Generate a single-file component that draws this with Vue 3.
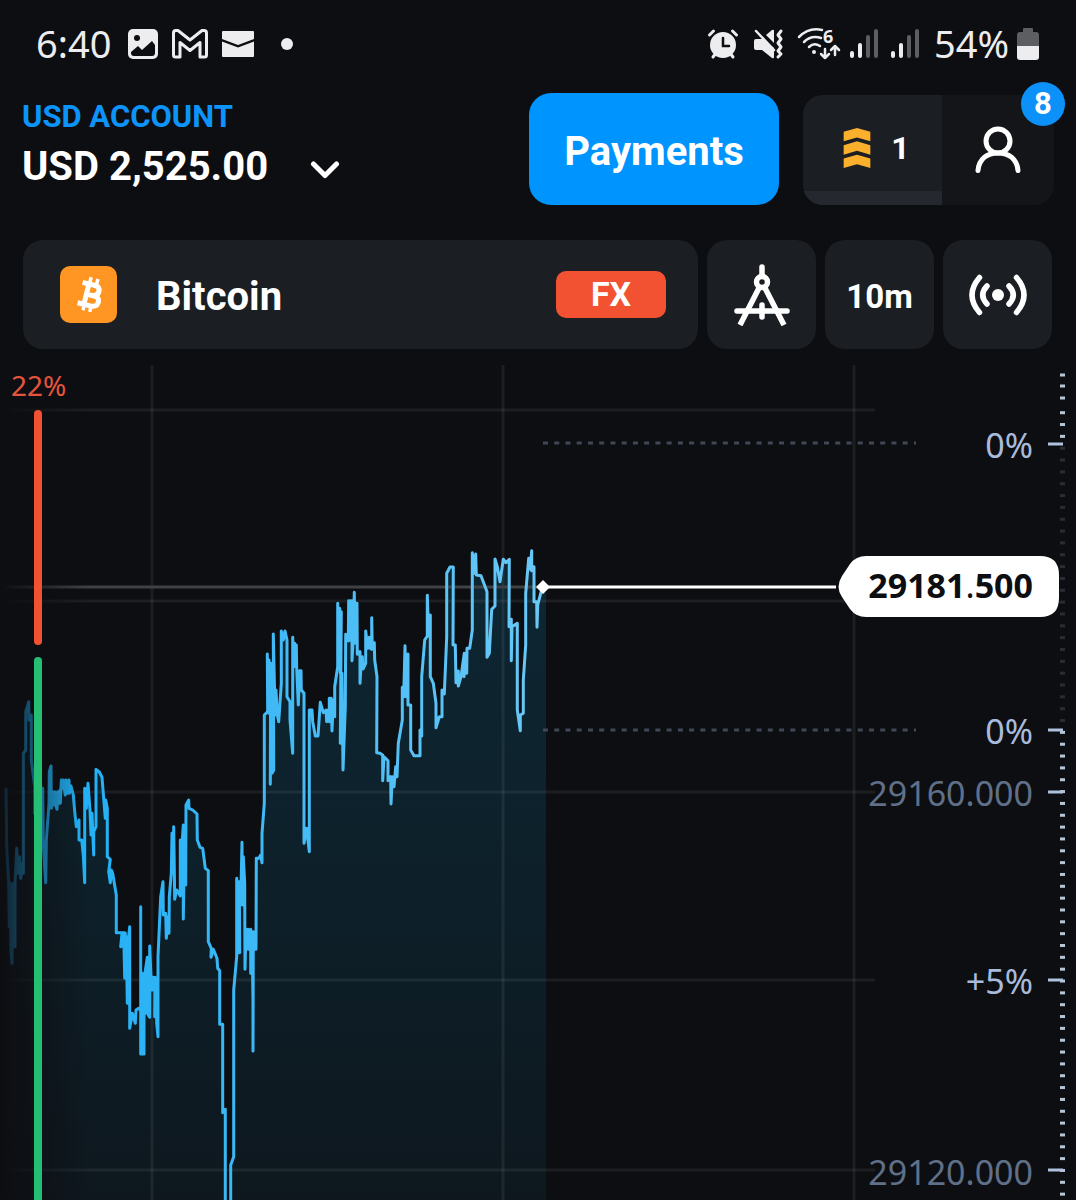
<script setup>
const toPixels = (originX, originY, raw) =>
  raw.trim().split(/\s+/).map((pair) => {
    const [x, y] = pair.split(',').map(Number)
    return [originX + x / 3, originY + y / 3]
  })

// Price history in third-of-a-pixel steps, oldest first.
const series = [
  ...toPixels(0, 740, `14,145 18,148 20,320 26,430 28,560 31,430 33,640 36,670 37,440 40,430 41,620 45,620 45,430 50,325 54,400 58,350 62,415 66,370 70,400 70,40 77,30
    77,-85 86,-115 87,-60 94,-75 94,60 104,140 104,220 114,240 120,145 128,145 130,315 137,428 139,300 147,190 148,95 153,78 154,205
    158,155 161,195 164,155 167,195 171,208 173,155 177,190 180,150 181,190 184,120 187,145 190,120 193,145 196,165 198,120 202,160 207,120 208,160 213,138 220,165 224,215
    229,260 237,240 237,300 245,300 250,345 254,428 254,145 259,205 264,130 270,210 273,285 276,220 281,345 281,275
    288,260 288,88 298,96 306,112 311,175 316,235 317,180 322,205 322,350 331,358 326,395 331,428 334,390 338,400 343,430 349,465 349,578 375,578
    362,620 366,580 370,620 371,580 374,715 376,580 380,712 379,590 382,790 385,600 389,560 389,865 397,820 406,850 408,810 416,805 422,810 422,500 422,942
    427,700 427,942 432,942 432,720 442,652 437,820 440,690 445,825 449,832 449,618 453,712 456,750 459,712 462,750 465,712 464,830 469,720 470,850 474,890 474,650 482,470 489,425 490,525
    497,520 499,595 504,530 507,580 508,470 514,400 516,280 519,400 521,260 524,478 530,450 541,468 541,300 544,460 547,300 550,255 550,537 554,260
    557,435 558,195 566,180 567,205 578,210 591,222 592,300 600,322 608,325 616,385 625,392 625,605 634,625 633,652
    640,628 651,655 653,685 659,692 659,853 668,853 668,1118 676,1108 676,1390 692,1390 692,1275 701,1250 701,750
    710,650 710,415 713,640 715,425 719,638 718,425 722,490 726,307 727,495 730,350 734,430 735,688 738,568 740,628 744,568 747,628 752,568 752,700 756,580 759,780
    759,933 760,575 764,628 768,628 769,355 777,355 782,345`),
  ...toPixels(200, 540, `186,968 186,880 193,790 193,525 203,515 202,342 206,520 207,360 210,520 212,370 211,733 214,380 216,700 221,690 220,282 223,420 226,525 228,450 232,525 236,545
    244,430 244,273 250,300 255,273 261,300 261,470 270,485 270,540 278,640 278,292 281,380 284,310 287,380 289,315 290,385 295,495 299,392 303,392
    304,450 312,460 312,910 320,865 328,935 328,510 336,510 338,545 346,588 354,588 361,487 370,518 378,510 380,545 384,510
    388,545 388,475 391,545 394,475 396,573 400,480 404,530 404,440 413,380 413,190 416,380 419,205 421,400 424,215 421,610 426,400 429,690 436,500 437,283 445,303
    446,182 449,300 452,182 455,305 456,182 456,362 460,290 463,157 464,310 468,190 471,190 472,343 480,335 480,430 484,360 487,350 489,387 497,370 497,273 503,325
    508,292 511,325 515,328 515,233 517,325 523,308 524,360 531,410 530,638 540,640`),
  ...toPixels(380, 530, `8,675 8,752 12,680 24,692 24,752 32,740 33,822 37,740 42,770 47,710 51,740 55,640 67,570 67,472 71,500 75,347 78,500 84,372
    84,525 92,525 92,660 102,677 120,677 120,600 125,618 125,440 134,330 142,318 142,196 146,318 151,255 151,440 160,460
    168,520 168,593 178,560 186,560 186,480 193,492 200,320 200,130 210,111 220,111 219,345 226,345 228,458 235,423
    235,468 243,440 253,370 252,440 256,380 260,430 261,355 269,355 277,300 277,68 283,130 287,72 289,135 303,137 321,185 321,382 328,370
    335,238 345,228 345,87 352,110 360,155 370,88 378,98 388,88 387,290 394,268 394,392 396,290 412,280 412,540
    421,602 421,555 430,550 430,450 437,345 437,190 446,85 451,118 455,62 455,122 462,110 462,215 470,215 471,292 473,225 482,190
    488,172`)
]
const linePoints = series.map((p) => p.map((v) => v.toFixed(1)).join(',')).join(' ')
const areaPoints = `5,1210 ${linePoints} 546,587 546,1210`

const columns = [152, 503, 854]
const rows = [410, 601, 792, 980, 1170]
const ticks = [444, 730, 792, 980, 1170]
const labels = [
  { text: '0%', y: 458 },
  { text: '0%', y: 744 },
  { text: '29160.000', y: 806, muted: true },
  { text: '+5%', y: 994 },
  { text: '29120.000', y: 1185, muted: true }
]
const dots = [375, 386, 398]
for (let i = 0; i < 67; i++) dots.push(412.7 + i * 11.84)
</script>

<template>
  <main class="app">
    <div class="status">
      <span>6:40</span>
      <svg class="photo" width="32" height="32" viewBox="0 0 32 32">
        <rect x="1" y="1" width="30" height="30" rx="5" fill="#ededef" />
        <circle cx="10" cy="10" r="3" fill="#0d0e12" />
        <path d="M4 24l7-6 4 4 10-9 3 4v8q0 3-3 3H7q-3 0-3-3z" fill="#0d0e12" />
      </svg>
      <svg class="gmail" width="36" height="30" viewBox="0 0 36 30" fill="none" stroke="#ededef" stroke-width="3" stroke-linejoin="round">
        <path d="M1.500 4Q1.500 1.500 4 1.500H6L18 11 30 1.500H32Q34.500 1.500 34.500 4V26Q34.500 28 32.500 28H28V13.500L18 21.500 8 13.500V28H3.500Q1.500 28 1.500 26Z" />
      </svg>
      <svg class="mail" width="34" height="28" viewBox="0 0 34 28">
        <path d="M2 1H32Q33 1 33 2V9L17 15 1 9V2Q1 1 2 1Z M1 11.500L17 17.500 33 11.500V26Q33 27 32 27H2Q1 27 1 26Z" fill="#ededef" />
      </svg>
      <i class="more"></i>
      <div class="indicators">
        <svg width="32" height="32" viewBox="0 0 32 32" stroke="#ededef" stroke-linecap="round" fill="none">
          <circle cx="16" cy="17" r="13" fill="#ededef" stroke="none" />
          <path d="M2.500 7L6.500 3M29.500 7L25.500 3M6 29l3-4M26 29l-3-4" stroke-width="3" />
          <path d="M16 10v8h6" stroke="#0d0e12" stroke-width="2.500" />
        </svg>
        <svg class="mute" width="32" height="32" viewBox="0 0 32 32" fill="#ededef">
          <path d="M3 11H10L21 20V29Q21 31 19 30L9 22H3Q1 22 1 20V13Q1 11 3 11Z M13 7L19 2Q21 1 21 3V15Z" />
          <path d="M3 3L21 22" stroke="#ededef" stroke-width="2.500" stroke-linecap="round" />
          <path d="M28 3l-3 4 3 4-3 4 3 4-3 4 3 3-3 3" fill="none" stroke="#ededef" stroke-width="3" stroke-linecap="round" stroke-linejoin="round" />
        </svg>
        <svg class="wifi" width="43" height="34" viewBox="0 0 43 34" fill="none" stroke="#ededef" stroke-width="2.500" stroke-linecap="round" stroke-linejoin="round">
          <path d="M2 10Q12 0 25 3M7 15Q14 8 24 11M12 20Q17 15 23 19" />
          <circle cx="17" cy="25" r="2" fill="#ededef" stroke="none" />
          <path d="M28 22V31M24 27l4 4 4-4M38 28V19M34 23l4-4 4 4" />
          <text x="26" y="16" class="wifi-generation">6</text>
        </svg>
        <svg v-for="n in 2" :key="n" class="signal" width="28" height="30" viewBox="0 0 28 30" stroke-width="4" stroke-linecap="round" fill="none">
          <path d="M2 24V27M10 16V27" stroke="#ededef" />
          <path d="M18 8V27M26 2V27" stroke="#5d5e61" />
        </svg>
        <span>54%</span>
        <svg class="battery" width="22" height="32" viewBox="0 0 22 32">
          <path d="M6 5V1q0-1 1-1h8q1 0 1 1V4h3q3 0 3 3V18H0V7q0-3 3-3H6Z" fill="#5d5e61" />
          <path d="M0 18H22V29q0 3-3 3H3q-3 0-3-3Z" fill="#ededef" />
        </svg>
      </div>
    </div>

    <header class="header">
      <button class="account">
        <span class="account-name">USD ACCOUNT</span>
        <span class="balance">USD 2,525.00
          <svg width="30" height="24" viewBox="0 0 30 24"><path d="M3.500 9L15 20.500 26.500 9" fill="none" stroke="#fff" stroke-width="5" stroke-linecap="round" stroke-linejoin="round" /></svg>
        </span>
      </button>
      <button class="payments">Payments</button>
      <div class="profile">
        <button class="level">
          <svg width="28" height="40" viewBox="0 0 28 42" fill="#fbb02d">
            <path d="M0 4L14 0 28 4V14L14 10 0 14ZM0 18L14 14 28 18V28L14 24 0 28ZM0 32L14 28 28 32V42L14 38 0 42Z" />
          </svg>
          1
        </button>
        <button class="user" aria-label="Profile">
          <svg width="46" height="48" viewBox="0 0 46 48" fill="none" stroke="#fff" stroke-width="5" stroke-linecap="round">
            <ellipse cx="23" cy="15" rx="12" ry="12" />
            <path d="M3 44.500C4 33 12 27 23 27S42 33 43 44.500" />
          </svg>
        </button>
        <span class="badge">8</span>
      </div>
    </header>

    <nav class="toolbar">
      <button class="asset">
        <svg width="57" height="57" viewBox="0 0 57 57">
          <rect width="57" height="57" rx="10" fill="#ff9522" />
          <g transform="rotate(14 28 28)" fill="none" stroke="#fff">
            <path d="M20 18H32Q38 18 38 23T32 28.500H26.500M20 39H33Q40 39 40 33.500T33 28.500H26.500M26.500 18V39" stroke-width="5" />
            <path d="M27 11V18M34 11V18M27 39V45M34 39V45" stroke-width="3.500" />
          </g>
        </svg>
        <span class="asset-name">Bitcoin</span>
        <span class="tag">FX</span>
      </button>
      <button class="tool" aria-label="Drawing tools">
        <svg width="58" height="62" viewBox="0 0 58 62" fill="none" stroke="#fff" stroke-width="5.500">
          <circle cx="29" cy="18" r="5.500" />
          <path d="M29 3V10M4 47H54M29 41V53" stroke-linecap="round" />
          <path d="M26 24L7 61M32 24L51 61" />
        </svg>
      </button>
      <button class="tool interval">10m</button>
      <button class="tool" aria-label="Signals">
        <svg width="58" height="42" viewBox="0 0 58 42" fill="none" stroke="#fff" stroke-width="5.500" stroke-linecap="round">
          <circle cx="29" cy="21" r="6" fill="#fff" stroke="none" />
          <path d="M10.500 3.500Q-4.500 21 10.500 38.500M18 12Q9.500 21 18 30M40 12Q48.500 21 40 30M47.500 3.500Q62.500 21 47.500 38.500" />
        </svg>
      </button>
    </nav>

    <svg class="chart" viewBox="0 360 1076 840" role="img" aria-label="Bitcoin price chart">
      <defs>
        <linearGradient id="line" gradientUnits="userSpaceOnUse" x1="0" y1="0" x2="546" y2="0">
          <stop offset="0" stop-color="#22b0f5" stop-opacity="0.1" />
          <stop offset="0.06" stop-color="#22b0f5" stop-opacity="0.42" />
          <stop offset="0.15" stop-color="#22b0f5" />
          <stop offset="1" stop-color="#6ac8f6" />
        </linearGradient>
        <linearGradient id="area" x1="0" y1="0" x2="0" y2="1">
          <stop offset="0" stop-color="#0d2733" />
          <stop offset="0.5" stop-color="#0d202a" />
          <stop offset="1" stop-color="#0e171e" />
        </linearGradient>
        <linearGradient id="edge" x1="0" y1="0" x2="1" y2="0">
          <stop offset="0" stop-color="#0d0e12" />
          <stop offset="0.3" stop-color="#0d0e12" stop-opacity="0.7" />
          <stop offset="1" stop-color="#0d0e12" stop-opacity="0" />
        </linearGradient>
      </defs>
      <polygon :points="areaPoints" fill="url(#area)" />
      <g stroke="#ffffff" stroke-opacity="0.065" stroke-width="3">
        <line v-for="x in columns" :key="'c' + x" :x1="x" y1="365" :x2="x" y2="1210" />
        <line v-for="y in rows" :key="'r' + y" x1="10" :y1="y" x2="875" :y2="y" />
      </g>
      <path d="M5 587H543" stroke="#404145" stroke-width="3" />
      <rect x="0" y="400" width="90" height="810" fill="url(#edge)" />
      <polyline :points="linePoints" fill="none" stroke="url(#line)" stroke-width="3" stroke-linejoin="round" />
      <path d="M38 414V641" stroke="#f25232" stroke-width="8" stroke-linecap="round" />
      <path d="M38 661V1210" stroke="#24bf73" stroke-width="8" stroke-linecap="round" />
      <text x="11" y="396" class="share">22%</text>

      <path d="M543 443H916M543 730H916" stroke="#3f4854" stroke-width="3" stroke-dasharray="5 6.24" />
      <path d="M543 587H836" stroke="#fff" stroke-width="3" />
      <path d="M543 580l7 7-7 7-7-7z" fill="#fff" />
      <rect v-for="y in dots" :key="y" x="1060" :y="y - 1.5" width="5" height="3" :fill="y > 440 && y < 728 ? '#292d33' : '#b5c6d8'" />
      <path v-for="y in ticks" :key="'t' + y" :d="`M1048 ${y}H1063`" stroke="#afc1df" stroke-width="3" />
      <text v-for="label in labels" :key="label.y" x="1033" :y="label.y" class="label" :class="{ muted: label.muted }">{{ label.text }}</text>
      <path d="M866 556H1040Q1059 556 1059 575V598Q1059 617 1040 617H866Q856 617 850 609L842 597Q835 587 842 576L850 564Q856 556 866 556Z" fill="#fff" />
      <text x="1033" y="598" class="price">29181<tspan class="point">.</tspan>500</text>
    </svg>
  </main>
</template>

<style>
body {
  margin: 0;
  background: #0d0e12;
}
</style>

<style scoped>
.app {
  background: #0d0e12;
  color: #fff;
  font-family: Roboto, sans-serif;
  overflow: hidden;
}
button {
  border: 0;
  margin: 0;
  padding: 0;
  color: inherit;
  font: inherit;
  cursor: pointer;
}
svg {
  display: block;
  flex: none;
}
.status {
  display: flex;
  align-items: center;
  height: 87px;
  padding: 0 37px 0 36px;
  color: #ededef;
  font: 38px/48px "Noto Sans", sans-serif;
}
.status span {
  padding-bottom: 2px;
}
.photo {
  margin-left: 16px;
}
.gmail {
  margin-left: 13px;
}
.mail {
  margin-left: 13px;
}
.more {
  width: 12px;
  height: 12px;
  margin-left: 26px;
  border-radius: 50%;
  background: #ededef;
}
.indicators {
  display: flex;
  align-items: center;
  margin-left: auto;
}
.mute {
  margin-left: 14px;
}
.wifi {
  margin-left: 12px;
  overflow: visible;
}
.wifi-generation {
  fill: #ededef;
  stroke: none;
  font: 700 18px "Noto Sans", sans-serif;
}
.signal {
  margin-left: 10px;
}
.signal + .signal {
  margin-left: 13px;
}
.indicators span {
  margin: 0 8px 0 15px;
}
.header {
  display: flex;
  height: 112px;
  padding: 6px 22px 35px;
}
.account {
  display: flex;
  flex-direction: column;
  margin-right: auto;
  padding-top: 3px;
  background: none;
  text-align: left;
  white-space: nowrap;
}
.account-name {
  color: #0d94fb;
  font-size: 31px;
  font-weight: 700;
  line-height: 42px;
}
.balance {
  display: flex;
  align-items: center;
  gap: 42px;
  font-size: 40px;
  font-weight: 700;
  line-height: 58px;
}
.payments {
  width: 250px;
  padding-top: 4px;
  border-radius: 22px;
  background: #0094ff;
  font-size: 40px;
  font-weight: 700;
}
.profile {
  position: relative;
  display: flex;
  width: 251px;
  margin: 2px 0 0 24px;
}
.level {
  display: flex;
  align-items: center;
  justify-content: center;
  gap: 20px;
  width: 139px;
  padding: 0 0 4px 8px;
  border-radius: 20px 0 0 20px;
  background: linear-gradient(#1b1e22 96px, #25282e 96px);
  font-size: 32px;
  font-weight: 700;
}
.user {
  display: flex;
  align-items: center;
  justify-content: center;
  flex: 1;
  border-radius: 0 20px 20px 0;
  background: #131519;
}
.badge {
  position: absolute;
  top: -13px;
  right: -11px;
  width: 44px;
  border-radius: 50%;
  background: #0c91f8;
  font-size: 31px;
  font-weight: 700;
  line-height: 44px;
  text-align: center;
}
.toolbar {
  display: flex;
  gap: 9px;
  height: 109px;
  margin-bottom: 11px;
  padding: 0 24px 0 23px;
}
.asset,
.tool {
  display: flex;
  align-items: center;
  border-radius: 20px;
  background: #1b1e22;
}
.asset {
  flex: 1;
  padding: 0 32px 0 37px;
}
.tool {
  justify-content: center;
  width: 109px;
}
.interval {
  padding-top: 4px;
  font-size: 33px;
  font-weight: 700;
}
.asset-name {
  margin: 0 auto 0 39px;
  padding-top: 5px;
  font-size: 40px;
  font-weight: 700;
  line-height: 56px;
}
.tag {
  width: 110px;
  border-radius: 10px;
  background: #f25232;
  font-size: 34px;
  font-weight: 700;
  line-height: 47px;
}
.chart {
  width: 100%;
  height: auto;
}
.chart text {
  font-family: "Noto Sans", sans-serif;
}
.share {
  fill: #e5553d;
  font-size: 28px;
}
.label {
  fill: #a9bbdb;
  font-size: 34px;
  text-anchor: end;
}
.muted {
  fill: #5f7088;
}
.price {
  fill: #0d0e12;
  font-size: 34px;
  font-weight: 700;
  text-anchor: end;
}
.point {
  font-weight: 400;
}
</style>
